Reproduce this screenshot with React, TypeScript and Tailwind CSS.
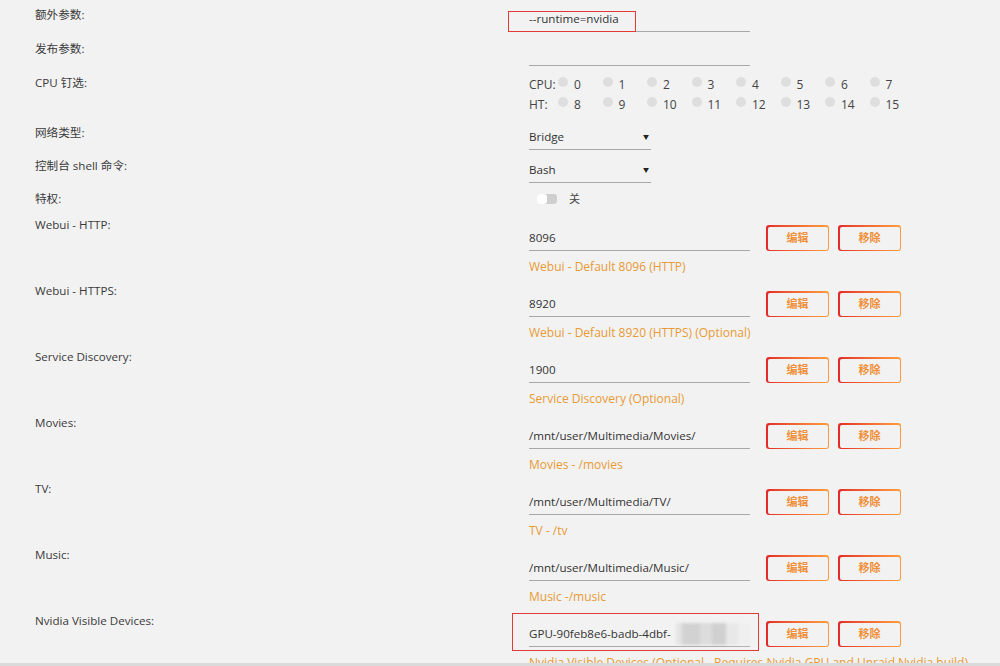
import React from 'react';

const font = { fontFamily: '"Open Sans", "Noto Sans CJK SC", sans-serif' };

interface PortRow {
  label: string;
  value: string;
  desc: string;
}

const portRows: PortRow[] = [
  { label: 'Webui - HTTP:', value: '8096', desc: 'Webui - Default 8096 (HTTP)' },
  { label: 'Webui - HTTPS:', value: '8920', desc: 'Webui - Default 8920 (HTTPS) (Optional)' },
  { label: 'Service Discovery:', value: '1900', desc: 'Service Discovery (Optional)' },
  { label: 'Movies:', value: '/mnt/user/Multimedia/Movies/', desc: 'Movies - /movies' },
  { label: 'TV:', value: '/mnt/user/Multimedia/TV/', desc: 'TV - /tv' },
  { label: 'Music:', value: '/mnt/user/Multimedia/Music/', desc: 'Music -/music' },
];

function Label({ children }: { children: React.ReactNode }) {
  return <div className="w-[494px] shrink-0 text-[11.6px] leading-[16px] text-[#3a3a3a]">{children}</div>;
}

function TextInput({ value, className = '' }: { value: string; className?: string }) {
  return (
    <div className={`relative flex w-[221px] items-center border-b border-[#a8a8a8] text-[11.6px] text-[#333] ${className}`}>
      {value}
    </div>
  );
}

function OrangeButton({ children }: { children: React.ReactNode }) {
  return (
    <div className="h-[26px] w-[63px] rounded-[3px] bg-gradient-to-r from-[#e22828] to-[#ff9c3f] p-[1.5px]">
      <div className="flex h-full w-full items-center justify-center rounded-[2px] bg-[#f2f2f2] text-[11px] font-bold text-[#f0903a]">
        {children}
      </div>
    </div>
  );
}

function Select({ value }: { value: string }) {
  return (
    <div className="flex h-[25px] w-[122px] items-center justify-between border-b border-[#a8a8a8] text-[11.6px] text-[#333]">
      <span>{value}</span>
      <span className="pr-[2px] text-[6px] text-[#222]">▼</span>
    </div>
  );
}

function CoreGrid({ title, cores }: { title: string; cores: number[] }) {
  return (
    <div className="flex h-[20px] items-center text-[12px] text-[#444]">
      <span className="w-[29px]">{title}</span>
      {cores.map((c) => (
        <span key={c} className="flex w-[44.5px] items-center">
          <span className="mr-[6px] -mt-[7px] h-[10px] w-[10px] rounded-full bg-[#dedede]" />
          <span>{c}</span>
        </span>
      ))}
    </div>
  );
}

export default function App() {
  return (
    <div className="h-[666px] w-[1000px] overflow-hidden bg-[#f2f2f2]" style={font}>
      <div className="h-[663px] overflow-hidden px-[35px] pt-[7px]">
        {/* extra params */}
        <div className="flex">
          <Label>额外参数:</Label>
          <div className="relative">
            <TextInput value="--runtime=nvidia" className="h-[25px]" />
            <div className="absolute left-[-21px] top-[4px] h-[21px] w-[128px] border-[1.5px] border-[#e23a3a]" />
          </div>
        </div>
        <div className="mt-[9px] flex">
          <Label>发布参数:</Label>
          <TextInput value="" className="h-[25px]" />
        </div>
        <div className="mt-[9px] flex">
          <Label>CPU 钉选:</Label>
          <div>
            <CoreGrid title="CPU:" cores={[0, 1, 2, 3, 4, 5, 6, 7]} />
            <CoreGrid title="HT:" cores={[8, 9, 10, 11, 12, 13, 14, 15]} />
          </div>
        </div>
        <div className="mt-[10px] flex">
          <Label>网络类型:</Label>
          <Select value="Bridge" />
        </div>
        <div className="mt-[8px] flex">
          <Label>控制台 shell 命令:</Label>
          <Select value="Bash" />
        </div>
        <div className="mt-[8px] flex">
          <Label>特权:</Label>
          <div className="flex h-[16px] items-center pl-[8px]">
            <div className="flex h-[10px] w-[20px] items-center rounded-[3px] bg-[#cfcfcf]">
              <div className="h-[10px] w-[10px] rounded-[3px] bg-white" />
            </div>
            <span className="ml-[12px] text-[11px] text-[#444]">关</span>
          </div>
        </div>

        {portRows.map((row, i) => (
          <div key={row.label} className={`flex ${i === 0 ? 'mt-[10px]' : 'mt-[8px]'}`}>
            <Label>{row.label}</Label>
            <div className="pt-[8px]">
              <div className="flex items-center">
                <TextInput value={row.value} className="h-[26px]" />
                <div className="ml-[16px] flex gap-[9px]">
                  <OrangeButton>编辑</OrangeButton>
                  <OrangeButton>移除</OrangeButton>
                </div>
              </div>
              <div className="mt-[8px] text-[12px] leading-[16px] text-[#e89a35]">{row.desc}</div>
            </div>
          </div>
        ))}

        {/* gpu row */}
        <div className="mt-[8px] flex">
          <Label>Nvidia Visible Devices:</Label>
          <div className="pt-[8px]">
            <div className="flex items-center">
              <div className="relative">
                <TextInput value="GPU-90feb8e6-badb-4dbf-" className="h-[26px]" />
                <div className="absolute left-[147px] top-[2px] flex h-[22px] w-[75px] blur-[1.5px]">
                  <div className="h-full w-[6px] bg-[#e4e4e4]" />
                  <div className="h-full w-[18px] bg-[#d2d2d2]" />
                  <div className="h-full w-[12px] bg-[#dcdcdc]" />
                  <div className="h-full w-[14px] bg-[#d0d0d0]" />
                  <div className="h-full w-[12px] bg-[#e8e8e8]" />
                  <div className="h-full w-[13px] bg-[#efefef]" />
                </div>
                <div className="absolute left-[-17px] top-[-8px] h-[38px] w-[247px] border-[1.5px] border-[#e23a3a]" />
              </div>
              <div className="ml-[16px] flex gap-[9px]">
                <OrangeButton>编辑</OrangeButton>
                <OrangeButton>移除</OrangeButton>
              </div>
            </div>
            <div className="mt-[8px] whitespace-nowrap text-[12px] leading-[16px] text-[#e89a35]">
              Nvidia Visible Devices (Optional - Requires Nvidia GPU and Unraid Nvidia build)
            </div>
          </div>
        </div>
      </div>
      <div className="h-[3px] bg-[#dadada]" />
    </div>
  );
}
